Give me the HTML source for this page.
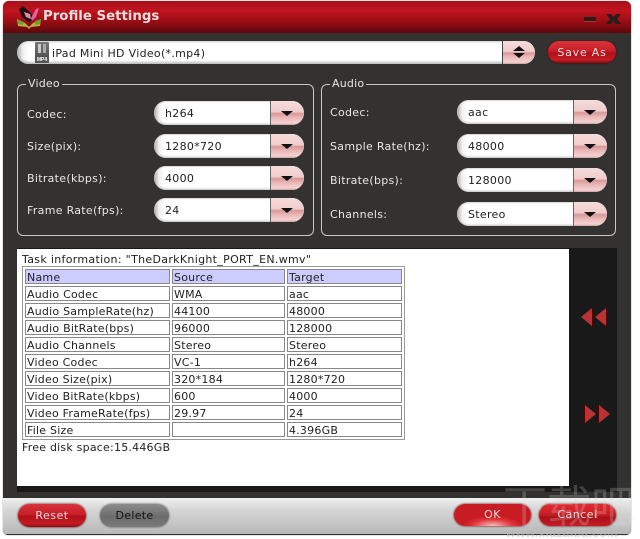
<!DOCTYPE html>
<html>
<head>
<meta charset="utf-8">
<style>
html,body{margin:0;padding:0;background:#fff;}
body{width:640px;height:539px;overflow:hidden;position:relative;font-family:"DejaVu Sans","Liberation Sans",sans-serif;font-size:11px;}
div,span{position:absolute;box-sizing:border-box;}
#win{left:3px;top:1px;width:628px;height:534px;background:#333231;border-radius:6px 6px 5px 5px;overflow:hidden;box-shadow:0 0 1px #555;}
#title{left:0;top:0;width:628px;height:32px;background:linear-gradient(#a8101a 0,#c0141e 30%,#a00e16 60%,#5c080c 100%);}
#ttext{left:40px;top:6px;font:bold 13.3px "DejaVu Sans",sans-serif;color:#f0dcdc;white-space:nowrap;line-height:20px;}
.lbl{color:#e8e7e2;white-space:nowrap;line-height:14px;letter-spacing:.3px;}
.fs{border:1px solid #c8c8c0;border-radius:6px;}
.leg{background:#333231;padding:0 2px;color:#e8e7e2;line-height:14px;top:-8px;left:8px;letter-spacing:.2px;}
.sel{width:150px;height:24px;border-radius:12px;overflow:hidden;background:linear-gradient(90deg,#aaa 0,#f0f0f0 5px,#fff 10px);box-shadow:inset 0 -1px 2px #bbb,inset 0 1px 1px #ddd;}
.sel .v{left:11px;top:6px;color:#222;line-height:14px;letter-spacing:.3px;white-space:nowrap;}
.sel .b{left:116px;top:0;width:34px;height:24px;background:linear-gradient(#f4dcdc 0,#f2cccc 45%,#d89898 52%,#eab8b8 70%,#f4d2d2 92%,#c8a0a0 100%);border-left:1px solid #666;}
.sel .b i{position:absolute;left:10px;top:10px;width:0;height:0;border-left:6px solid transparent;border-right:6px solid transparent;border-top:5px solid #111;}
.btn{border-radius:12px;text-align:center;line-height:24px;white-space:nowrap;letter-spacing:.5px;color:#f0dcdc;background:linear-gradient(#d8343c 0,#c81e28 45%,#b0101a 55%,#c41c24 85%,#8a0c12 100%);box-shadow:0 0 2px #500;}
#panel{left:14px;top:248px;width:552px;height:237px;background:#fff;}
#side{left:14px;top:247px;width:600px;height:244px;background:#1a1919;}
#tt{left:19px;top:252px;color:#222;line-height:14px;white-space:nowrap;font-size:11px;letter-spacing:.32px;}
table{position:absolute;left:19px;top:265px;width:383px;border:1px solid #999;border-collapse:separate;border-spacing:2px;table-layout:fixed;box-sizing:border-box;background:#fff;}
td{border:1px solid #888;padding:2px 0 0 1px;font-size:11px;line-height:11px;color:#222;white-space:nowrap;height:15px;box-sizing:border-box;letter-spacing:.22px;}
tr.h td{background:#ccccff;}
#foot{left:0;top:497px;width:628px;height:37px;background:linear-gradient(#f0f0f0 0,#d8d8d8 30%,#b8b8b8 100%);border-bottom:1px solid #333;}
#wm{left:505px;top:480px;width:135px;height:59px;overflow:hidden;}
</style>
</head>
<body>
<div id="win">
  <div id="title">
    <svg style="position:absolute;left:13px;top:4px" width="26" height="24" viewBox="0 0 26 24">
      <path d="M1 14 L9 18 L13 22 L17 18 L25 14 L24 21 L15 22 L13 24 L11 22 L2 21Z" fill="#b8b040"/>
      <path d="M3 4 L7 1 L15 8 L18 14 L13 17 L6 12Z" fill="#201014"/>
      <path d="M8 7 L14 9 L15 14 L10 12Z" fill="#e88aa8"/>
      <path d="M15 13 L20 4 L23 3 L20 12 L16 16Z" fill="#e060a0"/>
      <path d="M2 15 L8 17 L7 20 L2 19Z" fill="#70a030"/>
      <path d="M19 16 L25 14 L24 19 L19 20Z" fill="#70a030"/>
    </svg>
    <div id="ttext">Profile Settings</div>
    <div style="left:581px;top:16px;width:12px;height:4px;background:#2a1c1c;border-radius:1px;box-shadow:0 1px 0 #a33"></div>
    <svg style="position:absolute;left:603px;top:13px" width="15" height="10" viewBox="0 0 15 10"><path d="M0 0H5L7.500 3L10 0H15L11 5L15 10H10L7.500 7L5 10H0L4 5Z" fill="#2a1c1c"/></svg>
  </div>

  <!-- combo -->
  <div style="left:14px;top:40px;width:518px;height:23px;border-radius:12px;overflow:hidden;background:linear-gradient(90deg,#aaa 0,#f0f0f0 6px,#fff 12px);box-shadow:inset 0 -2px 2px #bbb,inset 0 1px 2px #ccc;">
    <div style="left:18px;top:1px;width:14px;height:21px;background:linear-gradient(#777,#444);border-radius:1px;">
      <div style="left:3px;top:2px;width:3px;height:9px;background:#ccc"></div>
      <div style="left:8px;top:2px;width:3px;height:9px;background:#aaa"></div>
      <div style="left:0;top:15px;width:14px;height:6px;background:#555;color:#fff;font:bold 5px/6px 'Liberation Sans',sans-serif;text-align:center;">MP4</div>
    </div>
    <div style="left:35px;top:6px;color:#222;line-height:14px;white-space:nowrap;letter-spacing:.3px;">iPad Mini HD Video(*.mp4)</div>
    <div style="left:485px;top:0;width:33px;height:23px;background:linear-gradient(#f4dcdc 0,#f2cccc 45%,#d89898 52%,#eab8b8 70%,#f4d2d2 92%,#c8a0a0 100%);border-left:1px solid #444;">
      <i style="position:absolute;left:10px;top:5px;width:0;height:0;border-left:6px solid transparent;border-right:6px solid transparent;border-bottom:5px solid #111"></i>
      <i style="position:absolute;left:10px;top:12px;width:0;height:0;border-left:6px solid transparent;border-right:6px solid transparent;border-top:5px solid #111"></i>
    </div>
  </div>
  <div class="btn" style="left:545px;top:40px;width:68px;height:22px;letter-spacing:.8px;">Save As</div>

  <!-- Video -->
  <div class="fs" style="left:14px;top:83px;width:297px;height:152px;"><div class="leg">Video</div></div>
  <div class="lbl" style="left:24px;top:107px;">Codec:</div>
  <div class="lbl" style="left:24px;top:139px;">Size(pix):</div>
  <div class="lbl" style="left:24px;top:171px;">Bitrate(kbps):</div>
  <div class="lbl" style="left:24px;top:203px;">Frame Rate(fps):</div>
  <div class="sel" style="left:151px;top:100px;"><div class="v">h264</div><div class="b"><i></i></div></div>
  <div class="sel" style="left:151px;top:133px;"><div class="v">1280*720</div><div class="b"><i></i></div></div>
  <div class="sel" style="left:151px;top:165px;"><div class="v">4000</div><div class="b"><i></i></div></div>
  <div class="sel" style="left:151px;top:197px;"><div class="v">24</div><div class="b"><i></i></div></div>

  <!-- Audio -->
  <div class="fs" style="left:318px;top:83px;width:295px;height:152px;"><div class="leg">Audio</div></div>
  <div class="lbl" style="left:327px;top:105px;">Codec:</div>
  <div class="lbl" style="left:327px;top:139px;">Sample Rate(hz):</div>
  <div class="lbl" style="left:327px;top:173px;">Bitrate(bps):</div>
  <div class="lbl" style="left:327px;top:207px;">Channels:</div>
  <div class="sel" style="left:454px;top:99px;"><div class="v">aac</div><div class="b"><i></i></div></div>
  <div class="sel" style="left:454px;top:133px;"><div class="v">48000</div><div class="b"><i></i></div></div>
  <div class="sel" style="left:454px;top:167px;"><div class="v">128000</div><div class="b"><i></i></div></div>
  <div class="sel" style="left:454px;top:201px;"><div class="v">Stereo</div><div class="b"><i></i></div></div>

  <!-- Task -->
  <div id="side"></div>
  <div id="panel"></div>
  <div id="tt">Task information: "TheDarkKnight_PORT_EN.wmv"</div>
  <table>
    <colgroup><col style="width:145px"><col style="width:113px"><col style="width:115px"></colgroup>
    <tr class="h"><td>Name</td><td>Source</td><td>Target</td></tr>
    <tr><td>Audio Codec</td><td>WMA</td><td>aac</td></tr>
    <tr><td>Audio SampleRate(hz)</td><td>44100</td><td>48000</td></tr>
    <tr><td>Audio BitRate(bps)</td><td>96000</td><td>128000</td></tr>
    <tr><td>Audio Channels</td><td>Stereo</td><td>Stereo</td></tr>
    <tr><td>Video Codec</td><td>VC-1</td><td>h264</td></tr>
    <tr><td>Video Size(pix)</td><td>320*184</td><td>1280*720</td></tr>
    <tr><td>Video BitRate(kbps)</td><td>600</td><td>4000</td></tr>
    <tr><td>Video FrameRate(fps)</td><td>29.97</td><td>24</td></tr>
    <tr><td>File Size</td><td></td><td>4.396GB</td></tr>
  </table>
  <div style="left:19px;top:440px;color:#222;line-height:14px;white-space:nowrap;letter-spacing:.22px;">Free disk space:15.446GB</div>

  <svg style="position:absolute;left:577px;top:305px" width="28" height="22" viewBox="0 0 28 22">
    <path d="M1 11 L12 2 V20Z" fill="#b83236"/><path d="M15 11 L26 2 V20Z" fill="#b83236"/>
    <path d="M12 2 V20 L13 20 V3Z M26 2 V20 L27 20 V3Z" fill="#500"/>
  </svg>
  <svg style="position:absolute;left:580px;top:402px" width="28" height="22" viewBox="0 0 28 22">
    <path d="M2 2 L13 11 L2 20Z" fill="#b83236"/><path d="M16 2 L27 11 L16 20Z" fill="#b83236"/>
    <path d="M1 2 V20 H2 V2Z M15 2 V20 H16 V2Z" fill="#500"/>
  </svg>

  <!-- Footer -->
  <div id="foot">
    <div class="btn" style="left:15px;top:6px;width:68px;height:23px;">Reset</div>
    <div class="btn" style="left:97px;top:6px;width:69px;height:23px;background:linear-gradient(#8c8c8c,#6c6c6c 55%,#7a7a7a);color:#111;box-shadow:0 0 2px #555;letter-spacing:.3px;">Delete</div>
    <div class="btn" style="left:451px;top:6px;width:77px;height:22px;line-height:22px;background:radial-gradient(ellipse 30px 10px at 50% 100%,#f8c0c0 0,#e03038 70%,#c81c24 100%);">OK</div>
    <div class="btn" style="left:536px;top:6px;width:77px;height:22px;line-height:22px;background:linear-gradient(#e02c34,#c81c24 50%,#a81018 60%,#c81c24);">Cancel</div>
  </div>
</div>
<div id="wm">
  <div style="left:-2px;top:-2px;font:44px 'Noto Sans CJK SC',sans-serif;color:rgba(225,225,225,.22);line-height:50px;white-space:nowrap;">下载吧</div>
  <div style="left:1px;top:47px;font:bold 12px 'Liberation Sans',sans-serif;color:rgba(190,190,190,.55);line-height:12px;white-space:nowrap;letter-spacing:.4px;">www.xiazaiba.com</div>
</div>
</body>
</html>
